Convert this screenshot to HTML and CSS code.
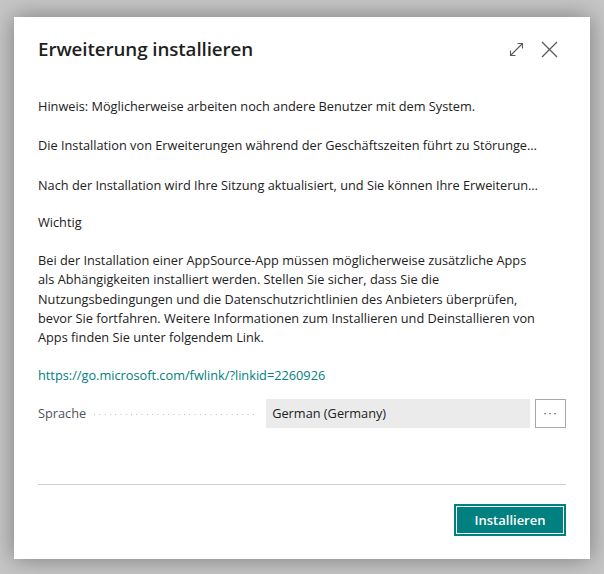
FILE: index.html
```html
<!DOCTYPE html>
<html lang="de">
<head>
<meta charset="utf-8">
<title>Erweiterung installieren</title>
<link rel="stylesheet" href="styles.css">
</head>
<body>
<div class="dialog">
  <div class="header">
    <h1 class="title">Erweiterung installieren</h1>
    <div class="actions">
      <button class="icon-btn" aria-label="Maximieren">
        <svg width="15" height="15" viewBox="0 0 15 15" fill="none" stroke="#5a5a5a" stroke-width="1.1">
          <path d="M1.5 13.5 L13.5 1.5"/>
          <path d="M8.5 1.5 H13.5 V6.5"/>
          <path d="M1.5 8.5 V13.5 H6.5"/>
        </svg>
      </button>
      <button class="icon-btn" aria-label="Schließen">
        <svg width="17" height="17" viewBox="0 0 17 17" fill="none" stroke="#5a5a5a" stroke-width="1.3">
          <path d="M1 1 L16 16 M16 1 L1 16"/>
        </svg>
      </button>
    </div>
  </div>
  <div class="content">
    <p class="line">Hinweis: Möglicherweise arbeiten noch andere Benutzer mit dem System.</p>
    <p class="line">Die Installation von Erweiterungen während der Geschäftszeiten führt zu Störunge…</p>
    <p class="line line-short">Nach der Installation wird Ihre Sitzung aktualisiert, und Sie können Ihre Erweiterun…</p>
    <p class="line line-head">Wichtig</p>
    <p class="para">Bei der Installation einer AppSource-App müssen möglicherweise zusätzliche Apps als Abhängigkeiten installiert werden. Stellen Sie sicher, dass Sie die Nutzungsbedingungen und die Datenschutzrichtlinien des Anbieters überprüfen, bevor Sie fortfahren. Weitere Informationen zum Installieren und Deinstallieren von Apps finden Sie unter folgendem Link.</p>
    <a class="link" href="#">https://go.microsoft.com/fwlink/?linkid=2260926</a>
    <div class="field">
      <span class="label">Sprache</span>
      <span class="leader"></span>
      <div class="input">German (Germany)</div>
      <button class="more" aria-label="Weitere">···</button>
    </div>
  </div>
  <div class="footer">
    <button class="primary">Installieren</button>
  </div>
</div>
</body>
</html>
```
FILE: styles.css
```css
html, body {
  margin: 0;
  padding: 0;
}
body {
  background: #c6c6c6;
  font-family: "Open Sans", "Noto Sans", sans-serif;
  color: #212121;
  width: 604px;
  height: 574px;
  overflow: hidden;
}
.dialog {
  margin: 17px 0 0 14px;
  width: 576px;
  height: 542px;
  background: #fff;
  box-shadow: 0 0 22px rgba(0, 0, 0, 0.38);
  box-sizing: border-box;
  padding: 0 24px;
  display: flex;
  flex-direction: column;
}
.header {
  display: flex;
  align-items: center;
  justify-content: space-between;
  height: 62px;
  padding-top: 1px;
}
.title {
  margin: 0;
  font-size: 18.8px;
  font-weight: 600;
  color: #1f1f1f;
  letter-spacing: -0.1px;
}
.actions {
  display: flex;
  align-items: center;
  gap: 17px;
  margin-right: 8px;
}
.icon-btn {
  border: 0;
  background: transparent;
  padding: 0;
  display: flex;
  align-items: center;
  justify-content: center;
}
.content {
  padding-top: 17px;
  font-size: 12.75px;
  line-height: 19.3px;
}
.line {
  margin: 0 0 20px;
  white-space: nowrap;
  overflow: hidden;
}
.line-short {
  margin-bottom: 18px;
}
.line-head {
  margin-bottom: 19px;
}
.para {
  margin: 0 0 18px;
  width: 500px;
}
.link {
  display: block;
  color: #00807e;
  text-decoration: none;
}
.field {
  display: flex;
  align-items: center;
  margin-top: 14px;
  height: 29px;
}
.label {
  color: #4f5360;
}
.leader {
  flex: none;
  width: 162px;
  height: 1px;
  margin: 3px 10px 0 8px;
  background-image: linear-gradient(to right, #b8b8b8 1px, transparent 1px);
  background-size: 5.3px 1px;
  background-repeat: repeat-x;
}
.input {
  flex: 1;
  background: #ebebec;
  height: 29px;
  line-height: 29px;
  padding-left: 6px;
  color: #212121;
}
.more {
  margin-left: 5px;
  width: 31px;
  height: 29px;
  border: 1px solid #a8a8a8;
  background: #fff;
  color: #444;
  font-size: 12px;
  padding: 0;
  letter-spacing: 1px;
}
.footer {
  margin-top: auto;
  border-top: 1px solid #d0d0d0;
  display: flex;
  justify-content: flex-end;
  padding-top: 19px;
  height: 75px;
  box-sizing: border-box;
}
.primary {
  height: 32px;
  width: 112px;
  background: #00807f;
  color: #fff;
  border: 1px solid #00807f;
  outline: 1px solid #fff;
  outline-offset: -3px;
  font-family: inherit;
  font-size: 13px;
  font-weight: 600;
  padding: 0;
}
```
